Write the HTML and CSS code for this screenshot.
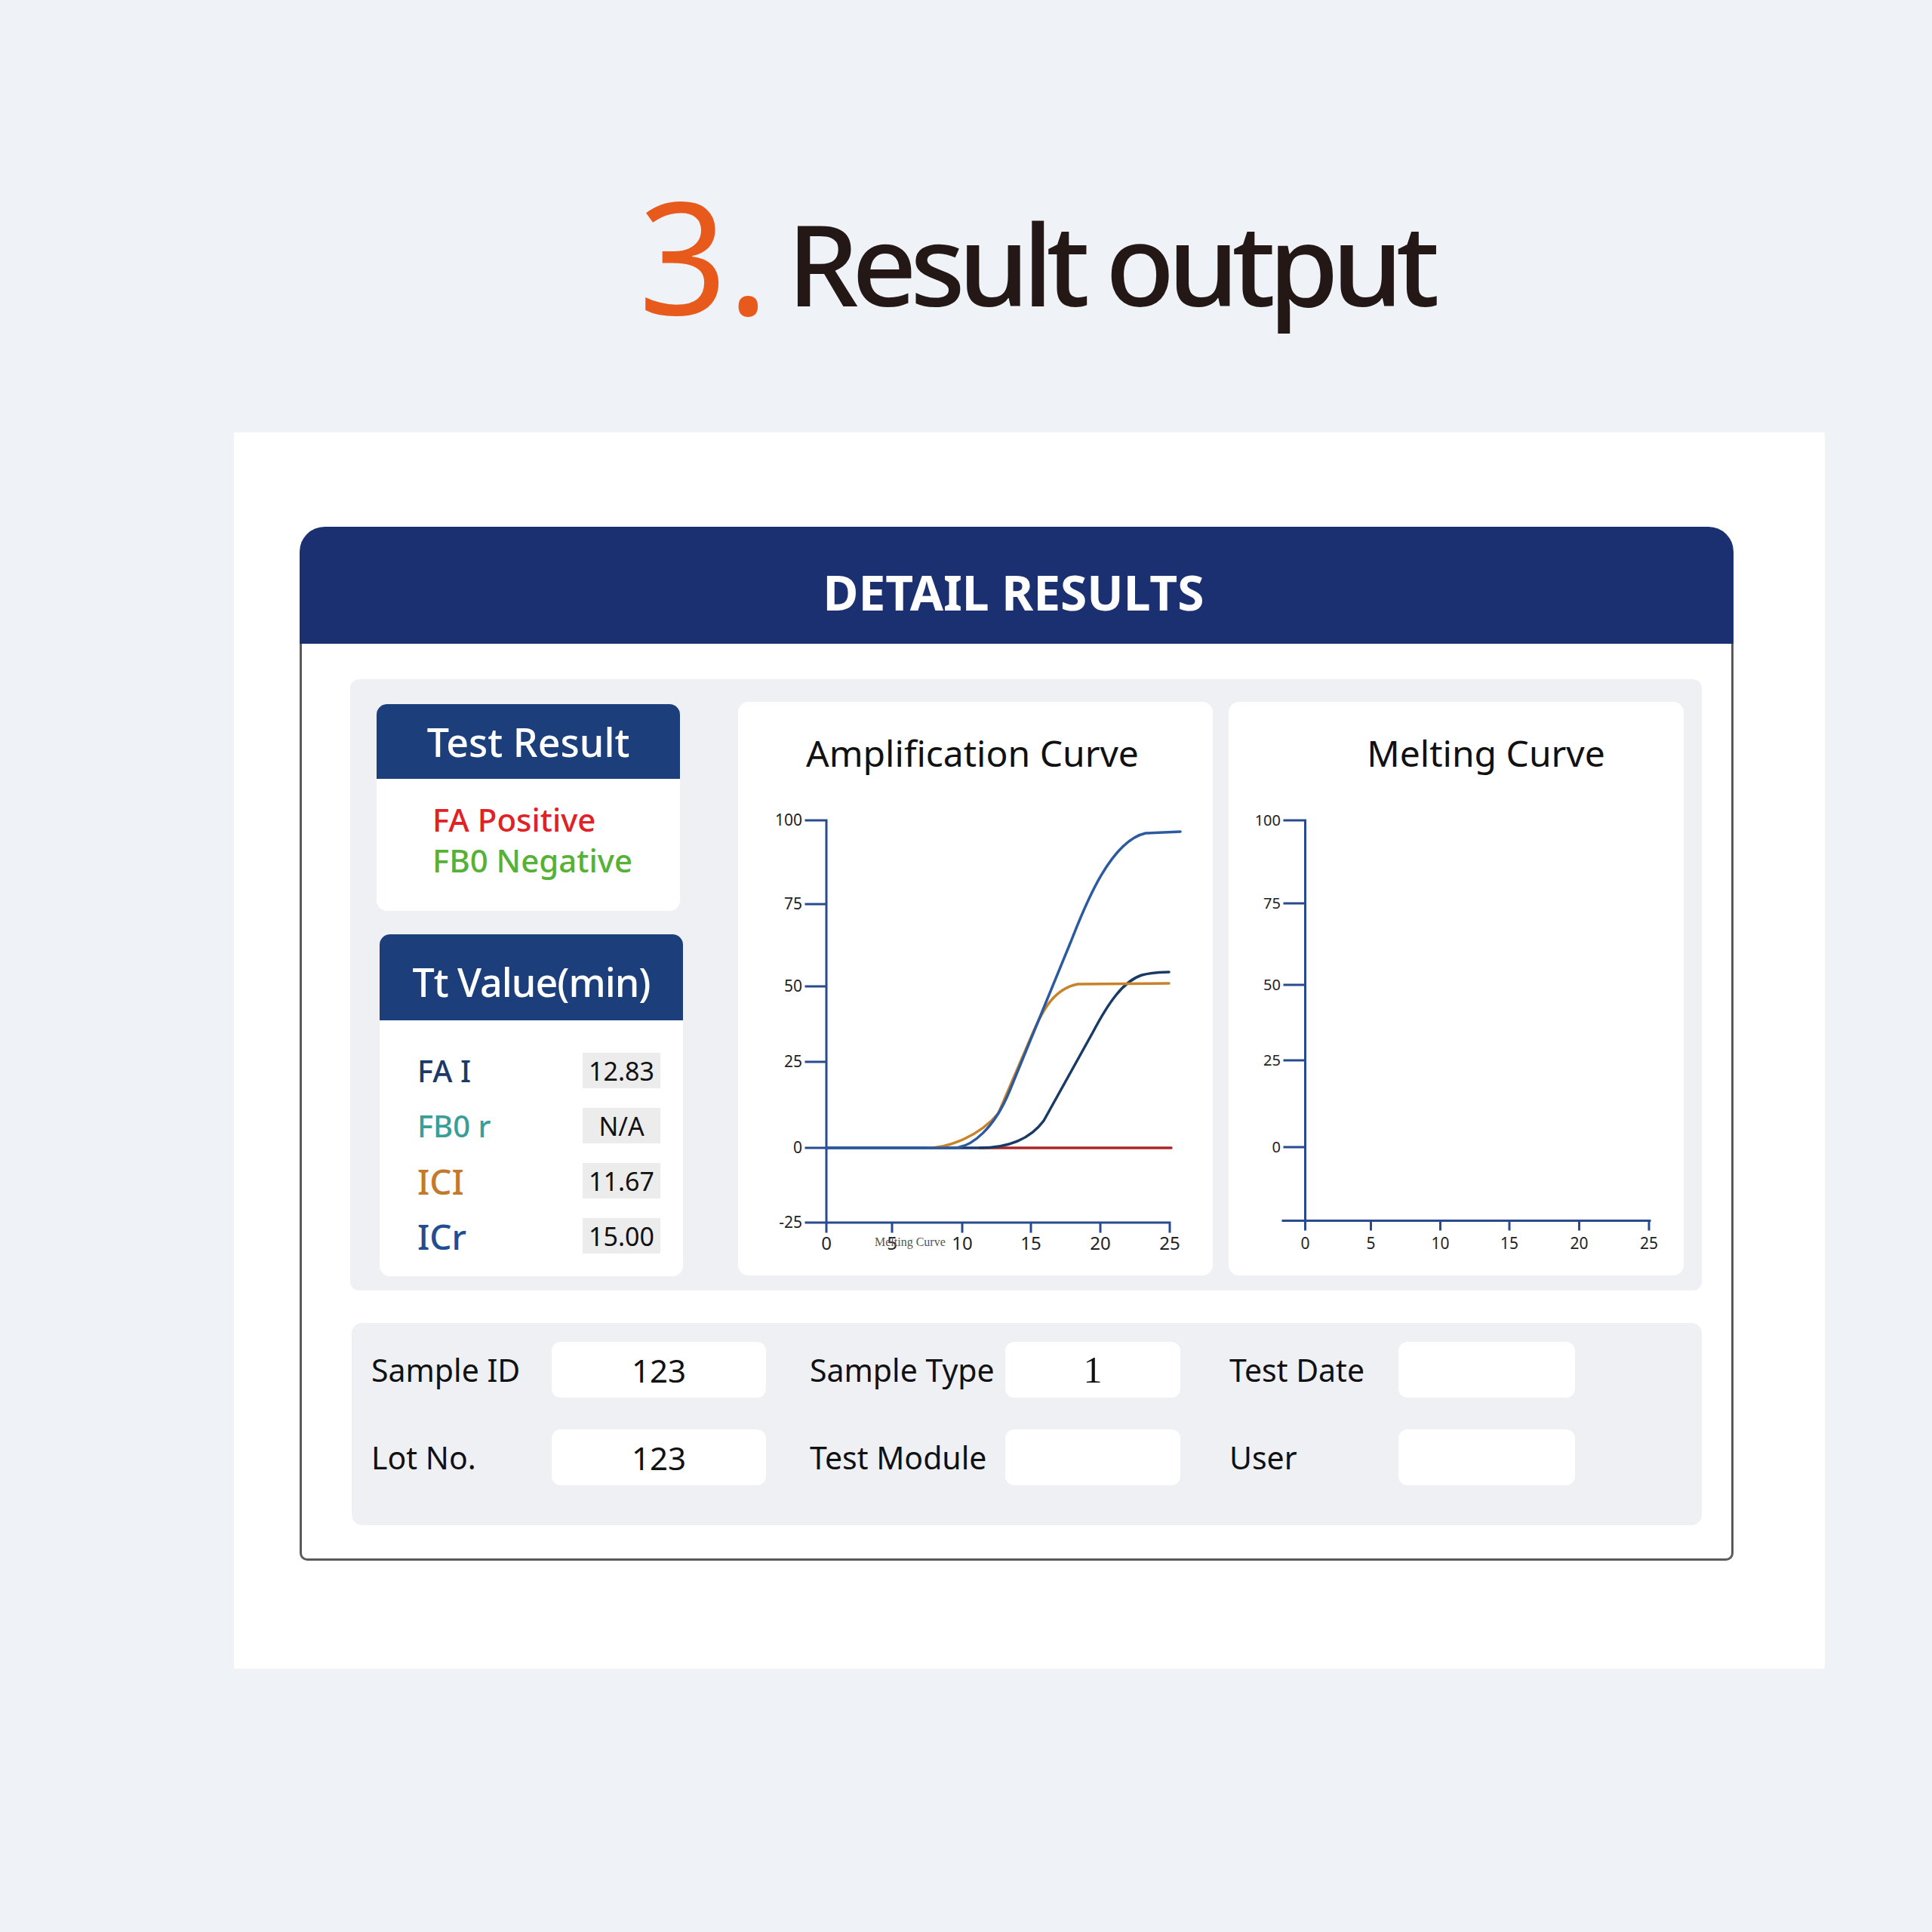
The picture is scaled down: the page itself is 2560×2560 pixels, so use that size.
FILE: index.html
```html
<!DOCTYPE html>
<html lang="en">
<head>
<meta charset="utf-8">
<title>Result output</title>
<link rel="stylesheet" href="styles.css">
</head>
<body>
<div class="page">
  <h1 class="title"><span class="num">3.</span><span class="txt">Result output</span></h1>
  <div class="panel">
    <div class="window">
      <div class="win-head">DETAIL RESULTS</div>
      <div class="win-body">
        <div class="top">
          <div class="col-left">
            <div class="card result">
              <div class="card-head">Test Result</div>
              <div class="result-body">
                <div class="pos">FA Positive</div>
                <div class="neg">FB0 Negative</div>
              </div>
            </div>
            <div class="card tt">
              <div class="card-head tall">Tt Value(min)</div>
              <div class="tt-body">
                <div class="tt-label c-navy">FA I</div><div class="tt-val">12.83</div>
                <div class="tt-label c-teal">FB0 r</div><div class="tt-val">N/A</div>
                <div class="tt-label big c-amber">ICI</div><div class="tt-val">11.67</div>
                <div class="tt-label big c-blue">ICr</div><div class="tt-val">15.00</div>
              </div>
            </div>
          </div>
          <div class="chart amp">
            <div class="chart-title">Amplification Curve</div>
            <svg class="plot" viewBox="0 0 629 630" width="629" height="630">
              <path class="axis" d="M117,27 V560 M90,27 H117 M90,138 H117 M90,247 H117 M90,347 H117 M90,461 H117 M90,560 H572 M117,560 V572 M204,560 V572 M297,560 V572 M388,560 V572 M480,560 V572 M572,560 V572"/>
              <g class="ylab">
                <text x="85" y="34">100</text>
                <text x="85" y="145">75</text>
                <text x="85" y="254">50</text>
                <text x="85" y="354">25</text>
                <text x="85" y="468">0</text>
                <text x="85" y="567">-25</text>
              </g>
              <g class="xlab">
                <text x="117" y="596">0</text>
                <text x="204" y="596">5</text>
                <text x="297" y="596">10</text>
                <text x="388" y="596">15</text>
                <text x="480" y="596">20</text>
                <text x="572" y="596">25</text>
              </g>
              <text class="ghost" x="181" y="591">Melting Curve</text>
              <path class="ln red" d="M320,461 L574,461"/>
              <path class="ln navy" d="M117,461 L320,461 C355,461 385,452 405,425 L470,308 C490,270 510,240 535,232 C550,228 560,228 571,228"/>
              <path class="ln orange" d="M250,461 C280,461 320,445 345,415 L390,310 C405,275 420,250 450,244 L571,243"/>
              <path class="ln blue" d="M117,461 L285,461 C310,461 340,434 360,385 L440,190 C455,153 490,55 540,44 L586,42"/>
            </svg>
          </div>
          <div class="chart melt">
            <div class="chart-title shifted">Melting Curve</div>
            <svg class="plot" viewBox="0 0 603 630" width="603" height="630">
              <path class="axis" d="M101.5,27 V557.5 M74,27 H101.5 M74,137 H101.5 M74,245 H101.5 M74,345 H101.5 M74,460 H101.5 M72,557.5 H558 M101.5,557.5 V569 M188.5,557.5 V569 M280.5,557.5 V569 M372,557.5 V569 M464.5,557.5 V569 M557,557.5 V569"/>
              <g class="ylab sm">
                <text x="69" y="34">100</text>
                <text x="69" y="144">75</text>
                <text x="69" y="252">50</text>
                <text x="69" y="352">25</text>
                <text x="69" y="467">0</text>
              </g>
              <g class="xlab sm">
                <text x="101.5" y="595">0</text>
                <text x="188.5" y="595">5</text>
                <text x="280.5" y="595">10</text>
                <text x="372" y="595">15</text>
                <text x="464.5" y="595">20</text>
                <text x="557" y="595">25</text>
              </g>
            </svg>
          </div>
        </div>
        <div class="info">
          <div class="lbl">Sample ID</div><div class="box">123</div>
          <div class="lbl pad1">Sample Type</div><div class="box serif">1</div>
          <div class="lbl pad2">Test Date</div><div class="box"></div>
          <div class="lbl">Lot No.</div><div class="box">123</div>
          <div class="lbl pad1">Test Module</div><div class="box"></div>
          <div class="lbl pad2">User</div><div class="box"></div>
        </div>
      </div>
    </div>
  </div>
</div>
</body>
</html>
```

FILE: styles.css
```css
* { box-sizing: border-box; }
html, body { margin: 0; padding: 0; }
body {
  background: #eff3f8;
  font-family: "Noto Sans", "Open Sans", sans-serif;
  color: #111;
}
.page { width: 2560px; height: 2560px; }

.title {
  display: flex;
  align-items: flex-start;
  margin: 0;
  padding: 234px 0 0 846px;
  font-weight: 500;
}
.title .num {
  font-size: 206px;
  line-height: 206px;
  font-weight: 400;
  color: #e85a1b;
}
.title .txt {
  font-size: 150px;
  line-height: 150px;
  margin-top: 39px;
  margin-left: 24px;
  letter-spacing: -9px;
  color: #231815;
}

.panel {
  margin: 133px 0 0 310px;
  width: 2108px;
  height: 1638px;
  background: #ffffff;
  padding: 125px 0 0 87px;
}
.window { width: 1900px; }
.win-head {
  height: 155px;
  background: #1b3071;
  border-radius: 33px 33px 0 0;
  color: #fff;
  font-weight: 700;
  font-size: 64px;
  display: flex;
  align-items: center;
  justify-content: center;
  padding-top: 18px;
  padding-right: 8px;
}
.win-body {
  height: 1215px;
  border: 3px solid #5a5a5a;
  border-top: none;
  border-radius: 0 0 10px 10px;
  padding: 47px 39px 0 64px;
}

.top {
  height: 810px;
  background: #eff0f4;
  border-radius: 12px;
  display: flex;
  padding: 30px 24px 0 35px;
}
.col-left { width: 406px; display: flex; flex-direction: column; padding-top: 3px; }
.card { background: #fff; border-radius: 14px; width: 402px; overflow: hidden; }
.card.result { height: 274px; }
.card.tt { height: 453px; margin-top: 31px; margin-left: 4px; }
.card-head {
  height: 99px;
  background: #1c3f7c;
  color: #fff;
  font-size: 52px;
  font-weight: 500;
  display: flex;
  align-items: center;
  justify-content: center;
}
.card-head.tall { height: 114px; padding-top: 10px; letter-spacing: -1px; }

.result-body {
  padding: 27px 0 0 74px;
  font-size: 42px;
  line-height: 54px;
  font-weight: 500;
}
.pos { color: #e02226; }
.neg { color: #55b236; }

.tt-body {
  display: grid;
  grid-template-columns: 219px 103px;
  grid-auto-rows: 47px;
  row-gap: 26px;
  padding: 43px 0 0 50px;
  align-items: center;
}
.tt-label { font-size: 40px; font-weight: 500; white-space: nowrap; }
.tt-label.big { font-size: 46px; }
.c-navy { color: #1b3a68; }
.c-teal { color: #3a9d98; }
.c-amber { color: #c27a2e; }
.c-blue { color: #1f4e93; }
.tt-val {
  height: 47px;
  background: #ececec;
  font-size: 34px;
  display: flex;
  align-items: center;
  justify-content: center;
  color: #111;
}

.chart {
  background: #fff;
  border-radius: 14px;
  height: 760px;
  padding-top: 35px;
}
.chart.amp { width: 629px; margin-left: 73px; }
.chart.melt { width: 603px; margin-left: 21px; }
.chart-title {
  font-size: 48px;
  line-height: 65px;
  height: 65px;
  text-align: center;
  color: #111;
  padding-right: 8px;
}
.chart-title.shifted { padding-right: 0; padding-left: 79px; }
.plot { display: block; margin-top: 30px; }
.axis { fill: none; stroke: #284a8e; stroke-width: 3; stroke-linecap: square; }
.ylab text { font-size: 21px; text-anchor: end; fill: #222; font-family: "Noto Sans", sans-serif; }
.xlab text { font-size: 24px; text-anchor: middle; fill: #222; font-family: "Noto Sans", sans-serif; }
.ylab.sm text { font-size: 20px; }
.xlab.sm text { font-size: 21px; }
.ghost { font-family: "Liberation Serif", serif; font-size: 16px; fill: #555; }
.ln { fill: none; stroke-width: 3.5; stroke-linejoin: round; stroke-linecap: round; }
.ln.red { stroke: #a8262a; }
.ln.navy { stroke: #1a3a66; }
.ln.orange { stroke: #c8822a; }
.ln.blue { stroke: #2c5aa0; }

.info {
  margin: 43px 0 0 2px;
  height: 268px;
  background: #eff0f4;
  border-radius: 14px;
  display: grid;
  grid-template-columns: 239px 284px 317px 232px 289px 234px;
  grid-template-rows: 74px 74px;
  row-gap: 42px;
  padding: 25px 0 0 26px;
  align-items: center;
}
.lbl { font-size: 41px; color: #111; white-space: nowrap; }
.lbl.pad1 { padding-left: 58px; }
.lbl.pad2 { padding-left: 65px; }
.box {
  height: 74px;
  background: #fff;
  border-radius: 12px;
  font-size: 42px;
  display: flex;
  align-items: center;
  justify-content: center;
  color: #111;
}
.box.serif { font-family: "Liberation Serif", serif; font-size: 50px; }
```
